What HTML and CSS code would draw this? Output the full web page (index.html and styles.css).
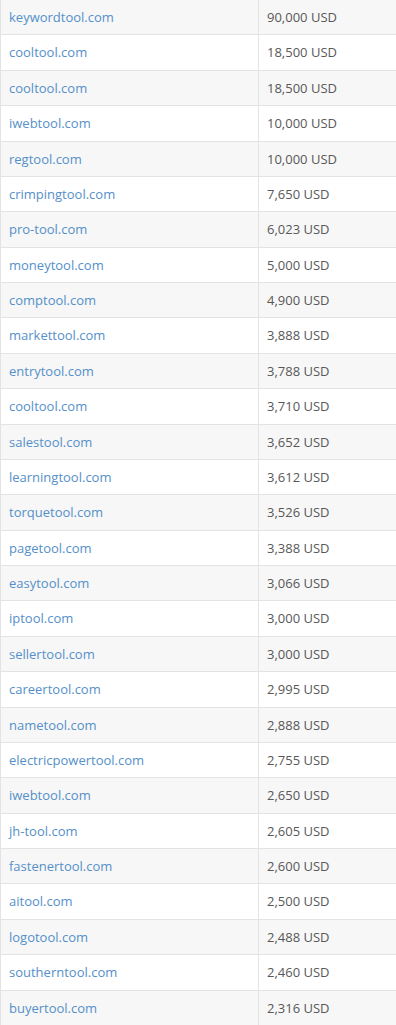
FILE: index.html
```html
<!DOCTYPE html>
<html>
<head>
<meta charset="utf-8">
<link rel="stylesheet" href="styles.css">
</head>
<body>
<table class="domains">
<tbody>
<tr><td class="name"><a href="#">keywordtool.com</a></td><td class="price">90,000 USD</td></tr>
<tr><td class="name"><a href="#">cooltool.com</a></td><td class="price">18,500 USD</td></tr>
<tr><td class="name"><a href="#">cooltool.com</a></td><td class="price">18,500 USD</td></tr>
<tr><td class="name"><a href="#">iwebtool.com</a></td><td class="price">10,000 USD</td></tr>
<tr><td class="name"><a href="#">regtool.com</a></td><td class="price">10,000 USD</td></tr>
<tr><td class="name"><a href="#">crimpingtool.com</a></td><td class="price">7,650 USD</td></tr>
<tr><td class="name"><a href="#">pro-tool.com</a></td><td class="price">6,023 USD</td></tr>
<tr><td class="name"><a href="#">moneytool.com</a></td><td class="price">5,000 USD</td></tr>
<tr><td class="name"><a href="#">comptool.com</a></td><td class="price">4,900 USD</td></tr>
<tr><td class="name"><a href="#">markettool.com</a></td><td class="price">3,888 USD</td></tr>
<tr><td class="name"><a href="#">entrytool.com</a></td><td class="price">3,788 USD</td></tr>
<tr><td class="name"><a href="#">cooltool.com</a></td><td class="price">3,710 USD</td></tr>
<tr><td class="name"><a href="#">salestool.com</a></td><td class="price">3,652 USD</td></tr>
<tr><td class="name"><a href="#">learningtool.com</a></td><td class="price">3,612 USD</td></tr>
<tr><td class="name"><a href="#">torquetool.com</a></td><td class="price">3,526 USD</td></tr>
<tr><td class="name"><a href="#">pagetool.com</a></td><td class="price">3,388 USD</td></tr>
<tr><td class="name"><a href="#">easytool.com</a></td><td class="price">3,066 USD</td></tr>
<tr><td class="name"><a href="#">iptool.com</a></td><td class="price">3,000 USD</td></tr>
<tr><td class="name"><a href="#">sellertool.com</a></td><td class="price">3,000 USD</td></tr>
<tr><td class="name"><a href="#">careertool.com</a></td><td class="price">2,995 USD</td></tr>
<tr><td class="name"><a href="#">nametool.com</a></td><td class="price">2,888 USD</td></tr>
<tr><td class="name"><a href="#">electricpowertool.com</a></td><td class="price">2,755 USD</td></tr>
<tr><td class="name"><a href="#">iwebtool.com</a></td><td class="price">2,650 USD</td></tr>
<tr><td class="name"><a href="#">jh-tool.com</a></td><td class="price">2,605 USD</td></tr>
<tr><td class="name"><a href="#">fastenertool.com</a></td><td class="price">2,600 USD</td></tr>
<tr><td class="name"><a href="#">aitool.com</a></td><td class="price">2,500 USD</td></tr>
<tr><td class="name"><a href="#">logotool.com</a></td><td class="price">2,488 USD</td></tr>
<tr><td class="name"><a href="#">southerntool.com</a></td><td class="price">2,460 USD</td></tr>
<tr><td class="name"><a href="#">buyertool.com</a></td><td class="price">2,316 USD</td></tr>
</tbody>
</table>
</body>
</html>
```
FILE: styles.css
```css
html, body {
  margin: 0;
  padding: 0;
  background: #ffffff;
}
body {
  font-family: "Open Sans", "Liberation Sans", sans-serif;
  font-size: 13px;
  color: #555555;
}
.domains {
  width: 396px;
  border-collapse: collapse;
  border-left: 1px solid #e3e3e3;
}
.domains tr {
  border-bottom: 1px solid #e3e3e3;
}
.domains tr:nth-child(odd) {
  background: #f7f7f7;
}
.domains td {
  padding: 8px 8px 8px 8px;
  line-height: 18.37px;
  vertical-align: middle;
  white-space: nowrap;
}
.domains td.name {
  width: 241px;
  border-right: 1px solid #e3e3e3;
}
.domains td.price {
  color: #585858;
}
.domains a {
  color: #5590c9;
  text-decoration: none;
}
```
